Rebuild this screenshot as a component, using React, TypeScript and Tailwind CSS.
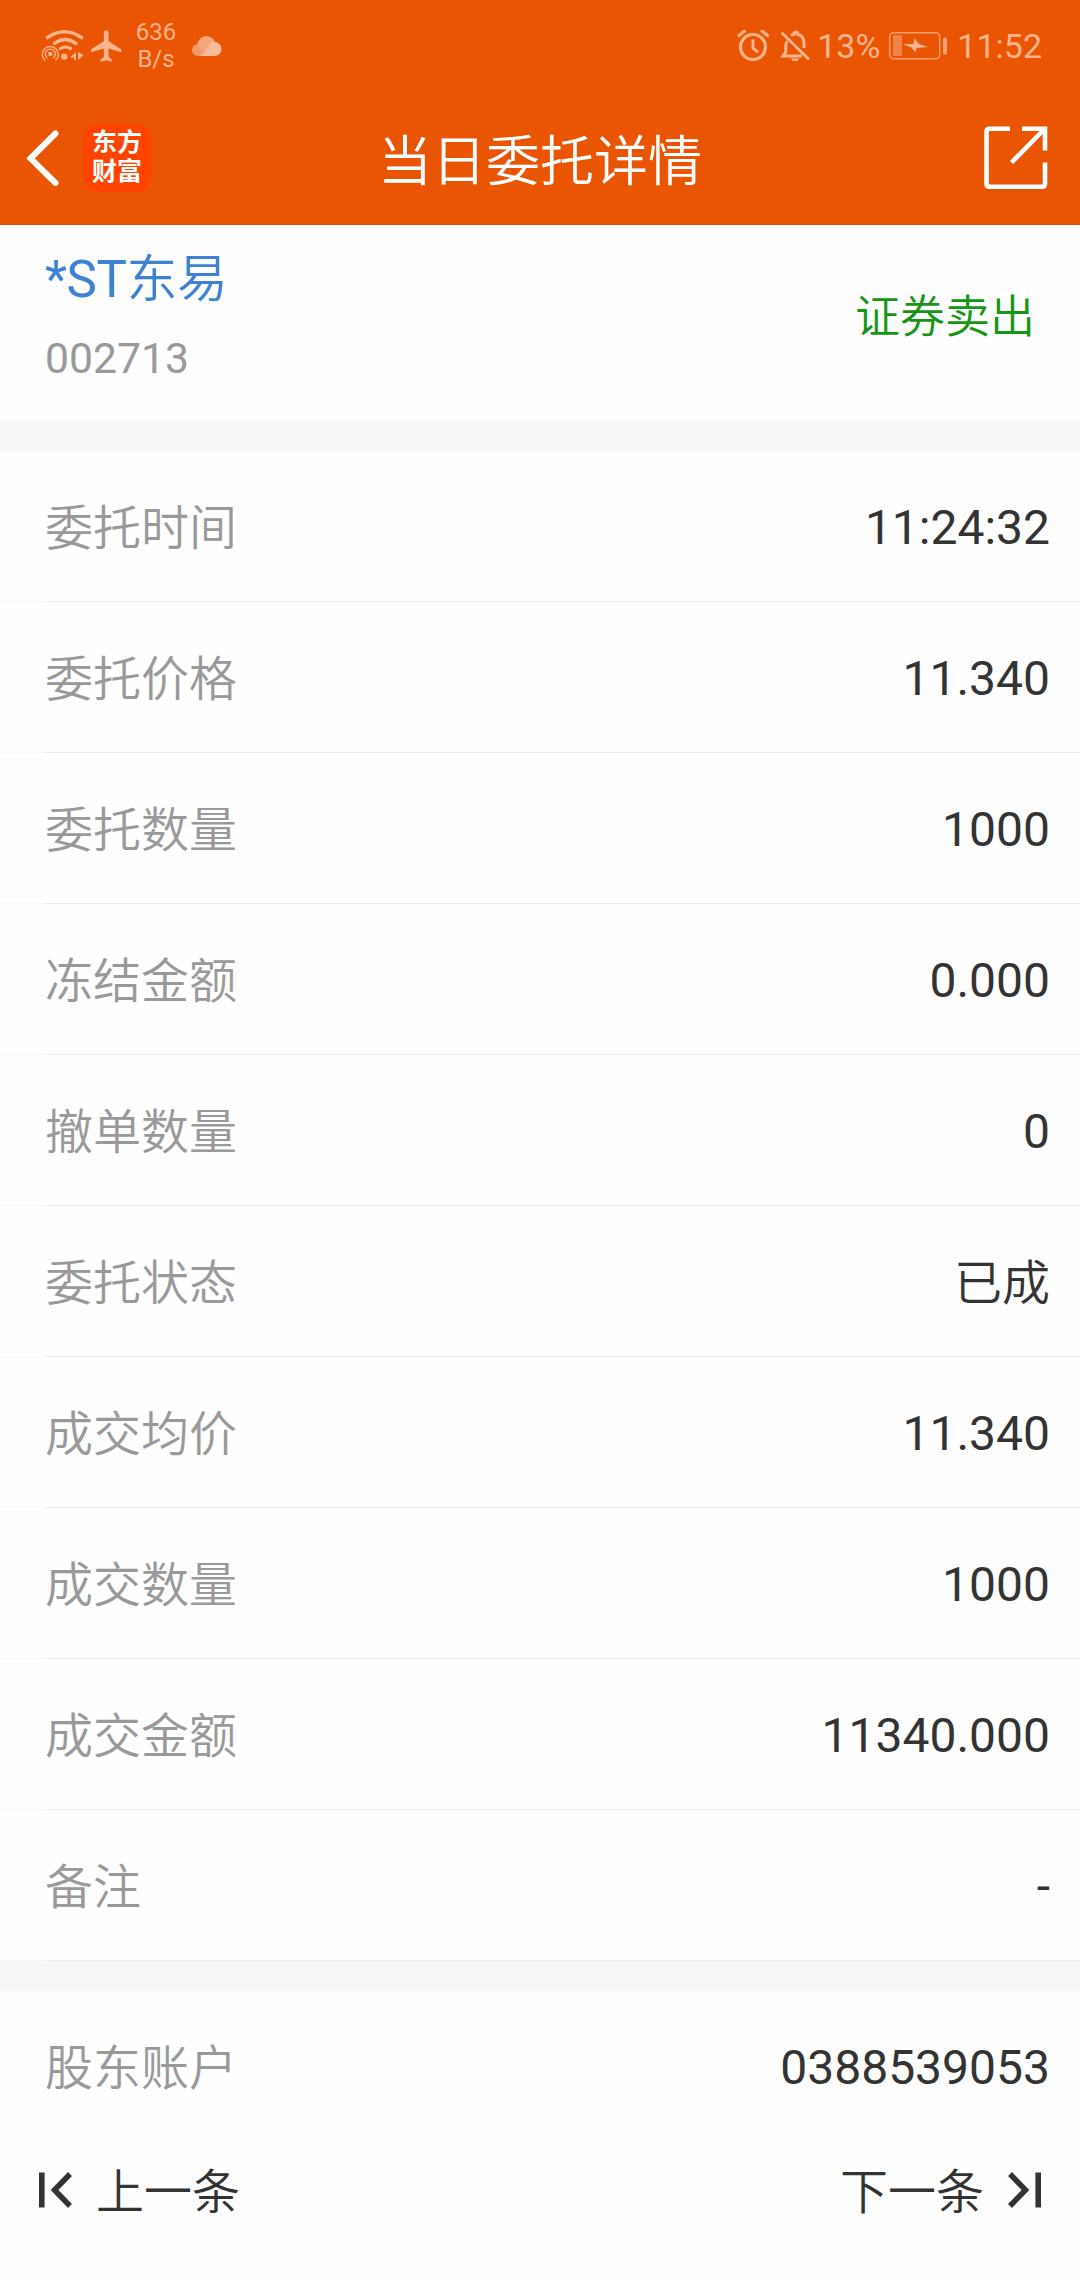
import { MdFlight } from 'react-icons/md';

interface Field {
    label: string;
    value: string;
}

const fields: Field[] = [
    { label: '委托时间', value: '11:24:32' },
    { label: '委托价格', value: '11.340' },
    { label: '委托数量', value: '1000' },
    { label: '冻结金额', value: '0.000' },
    { label: '撤单数量', value: '0' },
    { label: '委托状态', value: '已成' },
    { label: '成交均价', value: '11.340' },
    { label: '成交数量', value: '1000' },
    { label: '成交金额', value: '11340.000' },
    { label: '备注', value: '-' },
];

function WifiIcon() {
    return (
        <svg width="44" height="34" viewBox="40 28 44 34" fill="none" stroke="currentColor">
            <path d="M47.5 36.5Q64.5 25 81.5 36.5" strokeWidth="3.6" strokeLinecap="round" />
            <path d="M54.5 42.5Q65 34.5 76 42.5" strokeWidth="3.4" strokeLinecap="round" />
            <path d="M60.5 47.5Q65 44.5 70.5 47.5" strokeWidth="3.2" strokeLinecap="round" />
            <circle cx="64.3" cy="55.6" r="3.2" fill="currentColor" stroke="none" />
            <circle cx="50.3" cy="53" r="2.2" fill="currentColor" stroke="none" />
            <path d="M47.4 57.2A5 5 0 1 1 53.2 57.2" strokeWidth="1.4" />
            <path d="M45.2 59.6A8 8 0 1 1 55.4 59.6" strokeWidth="1.4" />
            <path d="M76 51v8h-2v-2.5h-4zM78 51v8l5.5-4.8-2-1.5z" fill="currentColor" stroke="none" />
        </svg>
    );
}

function CloudIcon() {
    return (
        <svg width="30" height="21" viewBox="192 36 30 21">
            <circle cx="198" cy="50" r="6" fill="#f19a6b" />
            <path d="M206.5 36a9 9 0 0 1 9 9c0 7-5 11-8 11h-9c3-1 4.5-3 4-6-3-1-5-3-5-6a9 9 0 0 1 9-8z" fill="#f4a67d" />
            <path d="M214.5 42a7 7 0 0 1 0 14h-15c6-1 6-5 9-10a7 7 0 0 1 6-4z" fill="#f8bc9b" />
        </svg>
    );
}

function AlarmIcon() {
    return (
        <svg width="32" height="32" viewBox="738 30 32 32" fill="none" stroke="currentColor">
            <circle cx="754" cy="47" r="12.5" strokeWidth="3.2" />
            <path d="M754 39.5v8.5l5 4.5" strokeWidth="3" />
            <path d="M740 35.5l5.5-4.5M768.5 35.5l-5.5-4.5" strokeWidth="3.2" strokeLinecap="round" />
        </svg>
    );
}

function BellOffIcon() {
    return (
        <svg width="30" height="32" viewBox="781 29 30 32" fill="none" stroke="currentColor" strokeWidth="3">
            <path d="M783.5 32.5l25.5 25" strokeLinecap="round" />
            <path d="M788 40c-1 2-1.2 4-1.2 7v4l-2.8 4h19" />
            <path d="M792 34.5c1-.8 2-1.2 3-1.3 0-2.2 2-2.2 2-2.2s1.6 0 1.6 2.2c4 1 6.4 4 6.4 8.8v5" />
            <path d="M792 57.5h8c-.8 3.4-7.2 3.4-8 0z" fill="currentColor" stroke="none" />
        </svg>
    );
}

function BatteryIcon() {
    return (
        <svg width="60" height="30" viewBox="888 31 60 30">
            <rect x="889.7" y="32.7" width="50" height="26" rx="4" fill="none" stroke="#f6a071" strokeWidth="1.5" />
            <rect x="893" y="35" width="9" height="21" rx="1" fill="#f1834a" />
            <path d="M902.5 44.2l11-.2 1-5.5 4.5 5.500 9 3-11.500 1-1 4.500-4-5z" fill="currentColor" />
            <rect x="943" y="37.5" width="4" height="17" rx="1.5" fill="#f6a071" />
        </svg>
    );
}

function StatusBar() {
    return (
        <div className="flex h-[92px] items-center justify-between pr-[38px] pl-10 text-[#fab48d]">
            <div className="flex items-center">
                <WifiIcon />
                <MdFlight className="ml-[4px] h-[38px] w-[38px]" />
                <div className="ml-[10px] flex w-[40px] flex-col items-center text-2xl leading-[27px]">
                    <span>636</span>
                    <span>B/s</span>
                </div>
                <div className="ml-4">
                    <CloudIcon />
                </div>
            </div>
            <div className="flex items-center text-[34px] leading-none">
                <AlarmIcon />
                <div className="ml-[11px]">
                    <BellOffIcon />
                </div>
                <span className="ml-[7px]">13%</span>
                <div className="ml-[8px]">
                    <BatteryIcon />
                </div>
                <span className="ml-[9px]">11:52</span>
            </div>
        </div>
    );
}

function NavBar() {
    return (
        <div className="flex h-[132px] items-center justify-between pr-[32px] pl-[26px] text-white">
            <div className="flex w-[208px] items-center">
                <svg width="34" height="56" viewBox="26 129 34 56" fill="none" stroke="currentColor" strokeWidth="6">
                    <path d="M55.5 132.5L30.5 157.3 55.5 182" strokeLinecap="round" />
                </svg>
                <div className="ml-[23px] flex h-[68px] w-[68px] flex-col items-center justify-center rounded-[14px] bg-[#ff4400] pb-[2px] text-[25px] leading-[29px] font-bold">
                    <span>东方</span>
                    <span>财富</span>
                </div>
            </div>
            <h1 className="pt-[9px] text-[54px] leading-none font-[350]">当日委托详情</h1>
            <div className="flex w-[202px] justify-end">
                <svg width="64" height="64" viewBox="984 125.5 64 64" fill="none" stroke="currentColor" strokeWidth="4.6">
                    <path d="M1010 128.3h-20.5q-3 0-3 3v52q0 3 3 3h52.5q3 0 3-3V162" />
                    <path d="M1022 128.3h23V150M1011.5 162l33-33.5" />
                </svg>
            </div>
        </div>
    );
}

function Row({ label, value }: Field) {
    return (
        <div className="flex h-[150px] items-center justify-between pt-[4px] pr-[30px] pl-[45px] text-[48px] leading-none">
            <span className="pt-[2px] font-[350] text-[#999999]">{label}</span>
            <span className={value === '已成' ? 'pt-[2px] font-[350] text-[#333333]' : 'text-[#333333]'}>{value}</span>
        </div>
    );
}

export default function App() {
    return (
        <div className="flex h-[2280px] w-[1080px] flex-col bg-[#fefefe] font-[Roboto,'Noto_Sans_CJK_SC',sans-serif]">
            <header className="border-b border-[#c6581c] bg-[#ea5504]">
                <StatusBar />
                <NavBar />
            </header>

            {/* Stock */}
            <section className="flex h-[196px] justify-between pr-[45px] pl-[45px]">
                <div className="flex flex-col pt-[26px]">
                    <span className="text-[51px] leading-[58px] tracking-[-0.4px] text-[#3e82d6]">
                        *ST<span className="font-[350]">东易</span>
                    </span>
                    <span className="mt-[24px] text-[42.7px] leading-[50px] text-[#999999]">002713</span>
                </div>
                <span className="mt-[70px] text-[45px] leading-[46px] font-[350] text-[#159615]">证券卖出</span>
            </section>

            <div className="h-[30px] bg-[#f6f7f9]" />

            {/* Order fields */}
            <section>
                {fields.map((f) => (
                    <div key={f.label}>
                        <Row label={f.label} value={f.value} />
                        <div className="h-px bg-[#f7f8f9] pl-[45px]">
                            <div className="h-px bg-[#ebebeb]" />
                        </div>
                    </div>
                ))}
            </section>

            <div className="h-[30px] bg-[#f6f7f9]" />

            <Row label="股东账户" value="0388539053" />

            {/* Pager */}
            <footer className="flex h-[98px] items-center justify-between pr-[38px] pl-[38px] text-[48px] leading-none font-[350] text-[#333333]">
                <button type="button" className="flex items-center">
                    <svg width="36" height="36" viewBox="0 0 36 36" fill="none" stroke="currentColor">
                        <path d="M3.8 .5v35" strokeWidth="5.6" />
                        <path d="M32 2L16.5 18 32 34" strokeWidth="5.5" />
                    </svg>
                    <span className="ml-[22px] pt-[5px]">上一条</span>
                </button>
                <button type="button" className="flex items-center">
                    <span className="pt-[5px]">下一条</span>
                    <svg className="ml-[22px]" width="36" height="36" viewBox="0 0 36 36" fill="none" stroke="currentColor">
                        <path d="M32.2 .5v35" strokeWidth="5.6" />
                        <path d="M4 2l15.5 16L4 34" strokeWidth="5.5" />
                    </svg>
                </button>
            </footer>
        </div>
    );
}
